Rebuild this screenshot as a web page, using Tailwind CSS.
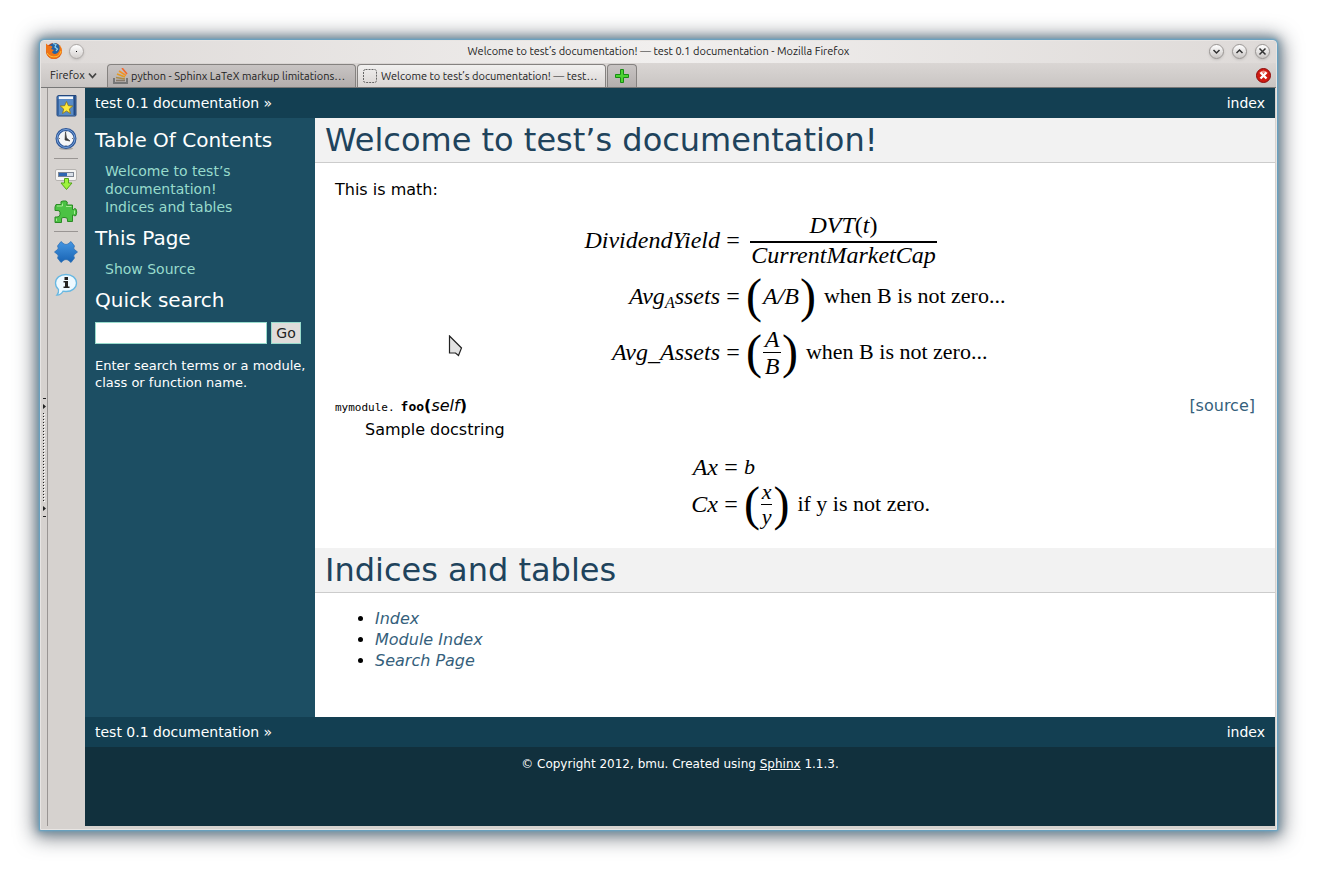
<!DOCTYPE html>
<html lang="en">
<head>
<meta charset="utf-8">
<title>Welcome to test’s documentation! — test 0.1 documentation</title>
<script src="https://cdn.jsdelivr.net/npm/@tailwindcss/browser@4"></script>
</head>
<body class="flex min-h-screen bg-white p-10 font-['DejaVu_Sans',sans-serif] text-black">
<div class="relative flex flex-1 flex-col rounded-t-sm border border-[#e8e5e3] bg-[#d6d2cf] pb-[3px] shadow-[0_0_2px_1px_#62a5c8,0_0_8px_2px_#6f8fa2,0_2px_20px_5px_#28323caa]">
  <header class="font-['Ubuntu','Open_Sans',sans-serif] text-[#222]">
    <div class="flex h-[22px] items-center rounded-t-sm bg-linear-to-r from-[#dedad8] via-[#f1efee] to-[#dedad8] pr-[6px] pb-[2px] pl-1">
      <svg class="size-[18px]" viewBox="0 0 18 18" aria-label="Firefox"><defs><radialGradient id="ff" cx=".7" cy=".4"><stop offset="0" stop-color="#ffd33a"/><stop offset=".5" stop-color="#f58a17"/><stop offset="1" stop-color="#c53d10"/></radialGradient></defs><circle cx="9" cy="9" r="8" fill="url(#ff)"/><circle cx="9.500" cy="6.500" r="5.500" fill="#2563a5"/><path d="M8 1.500L11 2.500L10 5L12.500 7L11 9" stroke="#8ed5ef" stroke-width="1.200" fill="none"/><path d="M1 8V1.500L4 4Q6 3 7.500 5L6 7L9 8L7 10Q8 13 12 11.500Q15.500 9 14.500 3.500Q18 8 16 12Q13 17 8 17Q1 16 1 8" fill="#ef7417"/><path d="M2 11Q5 16 12 14.500Q15 13 16 9" stroke="#ffbd32" fill="none"/></svg>
      <button class="ml-[6px] flex size-[15px] items-center justify-center rounded-full border border-[#aaa6a4] bg-linear-to-b from-white to-[#d4d0ce] shadow-sm" aria-label="Window menu"><span class="size-px bg-black"></span></button>
      <h1 class="flex-1 pl-6 text-center text-[11px] leading-5">Welcome to test’s documentation! — test 0.1 documentation - Mozilla Firefox</h1>
      <div class="flex gap-2">
        <button class="flex size-[15px] items-center justify-center rounded-full border border-[#999593] bg-linear-to-b from-white to-[#cbc7c5] shadow-sm" aria-label="Minimize"><svg class="size-[9px]" viewBox="0 0 9 9" fill="none" stroke="#333" stroke-width="1.5"><path d="M1.500 3L4.500 6L7.500 3"/></svg></button>
        <button class="flex size-[15px] items-center justify-center rounded-full border border-[#999593] bg-linear-to-b from-white to-[#cbc7c5] shadow-sm" aria-label="Maximize"><svg class="size-[9px]" viewBox="0 0 9 9" fill="none" stroke="#333" stroke-width="1.5"><path d="M1.500 6L4.500 3L7.500 6"/></svg></button>
        <button class="flex size-[15px] items-center justify-center rounded-full border border-[#999593] bg-linear-to-b from-white to-[#cbc7c5] shadow-sm" aria-label="Close"><svg class="size-[9px]" viewBox="0 0 9 9" fill="none" stroke="#333" stroke-width="1.5"><path d="M1.500 1.500L7.500 7.500M7.500 1.500L1.500 7.500"/></svg></button>
      </div>
    </div>
    <div class="flex h-[25px] items-end border-b border-[#777] bg-linear-to-b from-[#dad6d4] to-[#c9c5c3] text-[11px]">
      <button class="flex h-[23px] w-[66px] items-center gap-[3px] pl-[9px]">Firefox<svg class="size-[9px]" viewBox="0 0 9 9" fill="none" stroke="#444" stroke-width="1.8"><path d="M1 2.500L4.500 6.500L8 2.500"/></svg></button>
      <button class="flex h-[23px] w-[249px] items-center gap-[2px] rounded-t border border-b-0 border-[#858280] bg-linear-to-b from-[#c8c4c3] to-[#b3aead] pl-[5px] whitespace-nowrap">
        <svg class="size-4" viewBox="0 0 16 16" fill="none"><path d="M1 10V15H14V10" stroke="#777" stroke-width="2"/><path d="M3 12.500H12" stroke="#85796b" stroke-width="1.600"/><path d="M3 9.500L12 11" stroke="#a98b4c" stroke-width="1.600"/><path d="M4 6L12 9" stroke="#e39a22" stroke-width="1.600"/><path d="M6 3L13 7.500" stroke="#f39324" stroke-width="1.600"/><path d="M9 0L14 6" stroke="#f4662a" stroke-width="1.600"/></svg>
        python - Sphinx LaTeX markup limitations…</button>
      <button class="ml-px flex h-[23px] w-[249px] items-center gap-1 rounded-t border border-b-0 border-[#858280] bg-linear-to-b from-[#f1f0ef] to-[#d9d5d3] pl-[5px] whitespace-nowrap">
        <svg class="size-[14px]" viewBox="0 0 14 14"><rect x=".5" y=".5" width="13" height="13" rx="2" fill="none" stroke="#666" stroke-dasharray="2 1"/></svg>
        Welcome to test’s documentation! — test…</button>
      <button class="ml-px flex h-[23px] w-[30px] items-center justify-center rounded-t border border-b-0 border-[#858280] bg-linear-to-b from-[#c8c4c3] to-[#b3aead]" aria-label="New tab"><svg class="size-[14px]" viewBox="0 0 14 14"><path d="M5.500 .5h3v5h5v3h-5v5h-3v-5h-5v-3h5z" fill="#4bd331" stroke="#168c12"/></svg></button>
      <button class="mr-[5px] mb-1 ml-auto" aria-label="Close tab"><svg class="size-[15px]" viewBox="0 0 15 15"><circle cx="7.500" cy="7.500" r="7" fill="#cf1b12" stroke="#8e0b0b"/><path d="M3 5Q7.500 0 12 5" fill="#ee8a80"/><path d="M4.500 4.500L10.500 10.500M10.500 4.500L4.500 10.500" stroke="white" stroke-width="2.400"/></svg></button>
    </div>
  </header>
  <div class="flex flex-1 pr-px">
    <div class="flex w-[7px] flex-col items-center border-r border-[#999593]">
      <svg class="mt-[309px] h-[122px] w-[6px]" viewBox="0 0 6 122"><path d="M2 1.500h3M2 119.500h3" stroke="#222"/><path d="M2 7v5l3-2.500zM2 109v5l3-2.500z" fill="#222"/><path d="M2.500 16v89" stroke="#222" stroke-dasharray="1 2"/><path d="M3.500 17v89" stroke="white" stroke-dasharray="1 2"/></svg>
    </div>
    <nav class="flex w-[37px] flex-col items-center bg-[#d6d2cf] pt-px pr-[2px]" aria-label="Sidebar panels">
      <button class="flex h-[33px] items-center" aria-label="Bookmarks"><svg class="size-6" viewBox="0 0 24 24"><path d="M3 3Q3 1.500 5 1.500H22V21Q22 22 21 22H4Q3 22 3 21Z" fill="#5a8bc6" stroke="#24477c"/><path d="M5 2.500H19V5H5Z" fill="#f5f7fa"/><path d="M4 5V21" stroke="#2f5c99" stroke-width="1.500"/><path d="M20.500 2V21" stroke="#234a83" stroke-width="2"/><path d="M12.500 7.500L14.300 11.700L18.800 12L15.300 15L16.500 19.500L12.500 17L8.500 19.500L9.700 15L6.200 12L10.700 11.700Z" fill="#ffe93b" stroke="#8b741a" stroke-width=".8"/></svg></button>
      <button class="flex h-[33px] items-center" aria-label="History"><svg class="size-6" viewBox="0 0 24 24"><ellipse cx="12" cy="21.500" rx="7" ry="1.500" fill="#aaa6a3"/><circle cx="12" cy="11.500" r="9" fill="#f4f5f7" stroke="#2c5597" stroke-width="3"/><circle cx="12" cy="11.500" r="9" fill="none" stroke="#78a4dc"/><path d="M11.500 5L11 13L16 14L12.500 11Z" fill="#333" stroke="#444" stroke-width=".7"/><path d="M12 4v1M5 11.500h1M18 11.500h1M12 18v1" stroke="#777"/></svg></button>
      <span class="my-[3px] h-px w-6 bg-[#999593]"></span>
      <button class="flex h-[33px] items-center" aria-label="Downloads"><svg class="size-6" viewBox="0 0 24 24"><rect x="1.500" y="2.500" width="21" height="11" rx="1.500" fill="#f5f5f4" stroke="#b7b4b1"/><rect x="4.500" y="5.500" width="15" height="4" fill="#d9e0ea" stroke="#7c8592"/><path d="M5 6H13V9H5Z" fill="#2e67b2"/><path d="M10.500 11.500H14.500V16H18L12.500 22.500L7 16H10.500Z" fill="#9df33c" stroke="#54a51a"/></svg></button>
      <button class="flex h-[33px] items-center" aria-label="Add-ons"><svg class="size-6" viewBox="0 0 24 24"><path d="M2 4.500H7V3.500Q6 1 9 1H12Q14 1.500 13 4V5H18.500V9.500H19.500Q20 8 22 9Q23.500 12 22 15.500Q20 16.500 19.500 15H18.500V21.500H13.500V20Q14 17.500 11 17.500H9Q7 17.500 7.500 20V22.500H1V17H3Q6 17 6 14.500V12.500Q6 10 3 10.500H1V7Z" fill="#4cc244" stroke="#2b8b25"/><path d="M3 6H8.500V3.500M12 6.500H17.500M2.500 18.500V21M20.500 10.500V14" stroke="#a5eb91" fill="none"/></svg></button>
      <span class="my-[3px] h-px w-6 bg-[#999593]"></span>
      <button class="flex h-[33px] items-center" aria-label="Extension"><svg class="size-6" viewBox="0 0 24 24"><defs><linearGradient id="bl" x2="0" y2="1"><stop stop-color="#4596e2"/><stop offset="1" stop-color="#1863b3"/></linearGradient></defs><path d="M7 1.500L10 4Q12 5 14 4L17 1.500L20.500 6Q19 8.500 20.500 9.500L23.500 12L20.500 14.500Q19 15.500 20.500 18L17 22.500L14 20Q12 19 10 20L7 22.500L3.500 18Q5 15.500 3.500 14.500L.5 12L3.500 9.500Q5 8.500 3.500 6Z" fill="url(#bl)" stroke="#2369b1" stroke-width=".7"/></svg></button>
      <button class="flex h-[33px] items-center" aria-label="Information"><svg class="size-6" viewBox="0 0 24 24"><path d="M12 1.500C18 1.500 22.500 5 22.500 10S18 18.500 12 18.500L9 18.200Q7 22 3 22Q5 20 4.500 16.500Q1.500 14 1.500 10C1.500 5 6 1.500 12 1.500Z" fill="#eef9ff" stroke="#68b8e2" stroke-width="1.300"/><path d="M10.500 4h3.500v3h-3.500zM9.500 8h4.500v5.500h1.500V15h-6v-1.500H11V9.500H9.500z" fill="#222"/></svg></button>
    </nav>
    <div class="flex min-w-0 flex-1 flex-col bg-[#11303d] text-sm">
      <div class="flex h-[30px] items-center justify-between bg-[#133f52] px-[10px] text-white"><span><a href="#">test 0.1 documentation</a> »</span><a href="#">index</a></div>
      <div class="flex">
        <aside class="w-[230px] bg-[#1c4e63] px-[10px] pt-2 text-white">
          <h3 class="text-xl leading-7">Table Of Contents</h3>
          <ul class="mt-2 pl-[10px] leading-[18px] text-[#98dbcc]"><li><a href="#">Welcome to test’s documentation!</a></li><li><a href="#">Indices and tables</a></li></ul>
          <h3 class="mt-2 text-xl leading-7">This Page</h3>
          <a href="#" class="mt-2 block pl-[10px] leading-[18px] text-[#98dbcc]">Show Source</a>
          <h3 class="mt-2 text-xl leading-7">Quick search</h3>
          <form class="mt-2 flex gap-1">
            <input type="text" aria-label="Quick search" class="h-[22px] w-[172px] border border-[#98dbcc] bg-white px-1 text-black">
            <button type="button" class="h-[22px] w-[30px] border border-[#98dbcc] bg-[#e0dcda] leading-5 text-[#222]">Go</button>
          </form>
          <p class="mt-[13px] text-[13px] leading-[17px] whitespace-nowrap">Enter search terms or a module,<br>class or function name.</p>
        </aside>
        <main class="min-w-0 flex-1 bg-white pb-[46px] text-base">
          <h2 class="h-[45px] border-b border-[#ccc] bg-[#f2f2f2] px-[10px] text-[32px] leading-[44px] text-[#20435c]">Welcome to test’s documentation!</h2>
          <div class="px-5">
            <p class="pt-4 leading-[22px]">This is math:</p>
            <div class="mt-[11px] grid grid-cols-[136px_26px_260px] grid-rows-[56px_56px_56px] items-center justify-center font-['Liberation_Serif',serif] text-2xl whitespace-nowrap">
              <i class="text-right">DividendYield</i><span class="text-center">=</span>
              <span class="ml-1 inline-flex w-[187px] flex-col items-center leading-6 italic"><span class="pb-1">DVT<span class="not-italic">(</span>t<span class="not-italic">)</span></span><span class="w-full border-t-2 border-black text-center">CurrentMarketCap</span></span>
              <span class="text-right italic">Avg<sub class="text-base leading-none">A</sub>ssets</span><span class="text-center">=</span>
              <span class="flex items-center"><span class="text-5xl leading-[56px]">(</span><i class="px-px">A/B</i><span class="text-5xl leading-[56px]">)</span><span class="ml-2 text-[22px]">when B is not zero...</span></span>
              <i class="text-right">Avg_Assets</i><span class="text-center">=</span>
              <span class="flex items-center"><span class="text-5xl leading-[56px]">(</span><span class="mx-px flex w-[18px] flex-col text-center leading-[26px] italic"><span class="border-b border-black">A</span><span>B</span></span><span class="text-5xl leading-[56px]">)</span><span class="ml-2 text-[22px]">when B is not zero...</span></span>
            </div>
            <dl class="mt-[14px]">
              <dt class="flex h-6 items-baseline"><code class="font-['DejaVu_Sans_Mono',monospace] text-[11px]">mymodule.</code><code class="ml-[6px] font-['DejaVu_Sans_Mono',monospace] text-[13px] font-bold">foo</code><b>(</b><i>self</i><b>)</b><a href="#" class="ml-auto text-[#355f7c]">[source]</a></dt>
              <dd class="ml-[30px]"><p class="leading-6">Sample docstring</p>
                <div class="mt-3 grid grid-cols-[28px_26px_186px] grid-rows-[26px_48px] items-center justify-center font-['Liberation_Serif',serif] text-2xl whitespace-nowrap">
                  <i class="text-right">Ax</i><span class="text-center">=</span><i class="text-[22px] leading-6">b</i>
                  <i class="text-right">Cx</i><span class="text-center">=</span>
                  <span class="flex items-center"><span class="text-5xl leading-[48px]">(</span><span class="mx-px flex w-[14px] flex-col text-center text-[22px] leading-6 italic"><span class="border-b border-black">x</span><span>y</span></span><span class="text-5xl leading-[48px]">)</span><span class="ml-2 text-[22px]">if y is not zero.</span></span>
                </div>
              </dd>
            </dl>
          </div>
          <h2 class="mt-5 h-[45px] border-b border-[#ccc] bg-[#f2f2f2] px-[10px] text-[32px] leading-[44px] text-[#20435c]">Indices and tables</h2>
          <ul class="mt-[15px] list-disc pl-[60px] leading-[21px] italic"><li><a class="text-[#355f7c]" href="#">Index</a></li><li><a class="text-[#355f7c]" href="#">Module Index</a></li><li><a class="text-[#355f7c]" href="#">Search Page</a></li></ul>
        </main>
      </div>
      <div class="flex h-[30px] items-center justify-between bg-[#133f52] px-[10px] text-white"><span><a href="#">test 0.1 documentation</a> »</span><a href="#">index</a></div>
      <footer class="pt-2 text-center text-xs leading-[18px] text-white">© Copyright 2012, bmu. Created using <a href="#" class="underline">Sphinx</a> 1.1.3.</footer>
    </div>
  </div>
  <svg class="pointer-events-none absolute top-[294px] left-[407px] h-6 w-4" viewBox="0 0 16 24"><path d="M1.500 1L13.500 13L10.500 20.500L7.500 18H1.500Z" fill="#e2e2e2" stroke="#222" stroke-width="1.200"/></svg>
</div>
</body>
</html>
